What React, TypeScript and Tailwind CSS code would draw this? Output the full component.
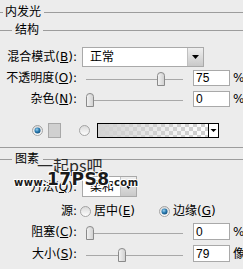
import React from "react";

const FONT = { fontFamily: '"DejaVu Sans", "Noto Sans CJK SC", sans-serif' };

function Line({ className = "" }: { className?: string }) {
  return <div className={`h-px bg-[#9c9c9c] ${className}`} />;
}

function Arrow() {
  return (
    <svg width="7" height="4" viewBox="0 0 7 4">
      <path d="M0 0 H7 L3.5 4 Z" fill="#000" />
    </svg>
  );
}

function Thumb({ left }: { left: number }) {
  return (
    <div className="absolute top-[-7px] w-[8px] h-[14px]" style={{ left }}>
      <svg width="8" height="14" viewBox="0 0 8 14">
        <defs>
          <linearGradient id="tg" x1="0" y1="0" x2="1" y2="0">
            <stop offset="0" stopColor="#f4f4f4" />
            <stop offset="1" stopColor="#cfcfcf" />
          </linearGradient>
        </defs>
        <path d="M0.5 3.5 Q0.5 0.5 4 0.5 Q7.5 0.5 7.5 3.5 V13.5 H0.5 Z" fill="url(#tg)" stroke="#8a8a8a" />
      </svg>
    </div>
  );
}

function Slider({ thumb }: { thumb: number }) {
  return (
    <div className="w-[111px] flex items-center self-stretch">
      <div className="relative ml-[4px] w-[97px] h-px bg-[#a8a8a8] mt-[3px]">
        <Thumb left={thumb} />
      </div>
    </div>
  );
}

function Input({ value, unit }: { value: string; unit: string }) {
  return (
    <>
      <div className="w-[37px] self-stretch bg-white border border-[#a9a9a9] flex items-center pl-[2px] text-[12px] text-black font-['Liberation_Sans']">
        {value}
      </div>
      <span className="ml-[3px] text-[12px] text-black">{unit}</span>
    </>
  );
}

function Label({ children }: { children: React.ReactNode }) {
  return <div className="w-[77px] text-right text-[12px] leading-none text-black whitespace-nowrap shrink-0">{children}</div>;
}

function Radio({ on }: { on: boolean }) {
  return (
    <svg width="11" height="11" viewBox="0 0 11 11">
      <defs>
        <radialGradient id="rb" cx="0.4" cy="0.35" r="0.7">
          <stop offset="0" stopColor="#9fd3ef" />
          <stop offset="0.5" stopColor="#2f7fb4" />
          <stop offset="1" stopColor="#0b4a78" />
        </radialGradient>
        <linearGradient id="rw" x1="0" y1="0" x2="0" y2="1">
          <stop offset="0" stopColor="#d8d8d8" />
          <stop offset="1" stopColor="#ffffff" />
        </linearGradient>
      </defs>
      <circle cx="5.5" cy="5.5" r="5" fill="url(#rw)" stroke="#a3a3a3" />
      {on && <circle cx="5.5" cy="5.5" r="3" fill="url(#rb)" />}
    </svg>
  );
}

function GradientBox() {
  return (
    <svg width="122" height="15" viewBox="0 0 122 15">
      <defs>
        <pattern id="ck" width="8" height="8" patternUnits="userSpaceOnUse">
          <rect width="8" height="8" fill="#ffffff" />
          <rect width="4" height="4" fill="#cfcfcf" />
          <rect x="4" y="4" width="4" height="4" fill="#cfcfcf" />
        </pattern>
        <linearGradient id="fd" x1="0" y1="0" x2="1" y2="0">
          <stop offset="0" stopColor="#d2d2d2" stopOpacity="1" />
          <stop offset="1" stopColor="#d2d2d2" stopOpacity="0" />
        </linearGradient>
      </defs>
      <rect x="0.5" y="0.5" width="121" height="14" fill="#fff" stroke="#000" />
      <rect x="1" y="1" width="110" height="13" fill="url(#ck)" />
      <rect x="1" y="1" width="110" height="13" fill="url(#fd)" />
      <line x1="111.5" y1="1" x2="111.5" y2="14" stroke="#000" />
      <path d="M113.5 6 H119.5 L116.5 9 Z" fill="#000" />
    </svg>
  );
}

function Select({ text, w }: { text: string; w: string }) {
  return (
    <div className={`${w} self-stretch flex bg-white border border-[#a9a9a9]`}>
      <div className="flex-1 flex items-center pl-[7px] text-[12px] text-black">{text}</div>
      <div className="w-[16px] border-l border-[#c0c0c0] bg-gradient-to-b from-[#efefef] to-[#c9c9c9] flex items-center justify-center">
        <Arrow />
      </div>
    </div>
  );
}

function U({ c }: { c: string }) {
  return <span className="underline underline-offset-[1px]">{c}</span>;
}

export default function App() {
  return (
    <div className="w-[243px] h-[269px] bg-[#ececec] relative overflow-hidden" style={FONT}>
      <div className="mt-[4px] h-[16px] flex items-center">
        <Line className="w-[3px]" />
        <span className="ml-[2px] text-[12px] leading-none text-black">内发光</span>
        <Line className="flex-1 ml-[3px]" />
      </div>
      <div className="mt-[2px] h-[16px] flex items-center">
        <Line className="w-[12px]" />
        <span className="ml-[3px] text-[12px] leading-none text-black">结构</span>
        <Line className="flex-1 ml-[4px]" />
      </div>
      <div className="mt-[9px] h-[20px] flex items-center">
        <Label>混合模式(<U c="B" />):</Label>
        <div className="ml-[5px] flex self-stretch">
          <Select text="正常" w="w-[122px]" />
        </div>
      </div>
      <div className="mt-[3px] h-[16px] flex items-center">
        <Label>不透明度(<U c="O" />):</Label>
        <div className="ml-[5px] flex self-stretch items-center">
          <Slider thumb={71} />
          <Input value="75" unit="%" />
        </div>
      </div>
      <div className="mt-[5px] h-[16px] flex items-center">
        <Label>杂色(<U c="N" />):</Label>
        <div className="ml-[5px] flex self-stretch items-center">
          <Slider thumb={0} />
          <Input value="0" unit="%" />
        </div>
      </div>
      <div className="mt-[16px] h-[15px] flex items-center">
        <div className="ml-[32px]"><Radio on /></div>
        <div className="ml-[5px] w-[13px] h-[15px] bg-[#d0d0d0] border border-[#a8a8a8]" />
        <div className="ml-[18px]"><Radio on={false} /></div>
        <div className="ml-[7px] flex"><GradientBox /></div>
      </div>
      <Line className="mt-[9px] w-full" />
      <div className="mt-[3px] h-[16px] flex items-center">
        <Line className="w-[12px]" />
        <span className="ml-[3px] text-[12px] leading-none text-black">图素</span>
        <Line className="flex-1 ml-[4px]" />
      </div>
      <div className="mt-[9px] h-[21px] flex items-center">
        <Label>方法(<U c="Q" />):</Label>
        <div className="ml-[5px] flex self-stretch">
          <Select text="柔和" w="w-[55px]" />
        </div>
      </div>
      <div className="mt-[7px] h-[14px] flex items-center text-[12px] text-black leading-none">
        <Label>源:</Label>
        <div className="ml-[3px] flex"><Radio on={false} /></div>
        <span className="ml-[3px]">居中(<U c="E" />)</span>
        <div className="ml-[24px] flex"><Radio on /></div>
        <span className="ml-[3px]">边缘(<U c="G" />)</span>
      </div>
      <div className="mt-[5px] h-[17px] flex items-center">
        <Label>阻塞(<U c="C" />):</Label>
        <div className="ml-[5px] flex self-stretch items-center">
          <Slider thumb={0} />
          <Input value="0" unit="%" />
        </div>
      </div>
      <div className="mt-[5px] h-[17px] flex items-center">
        <Label>大小(<U c="S" />):</Label>
        <div className="ml-[5px] flex self-stretch items-center">
          <Slider thumb={32} />
          <Input value="79" unit="像" />
        </div>
      </div>

      <div className="absolute left-[37px] top-[157px] text-[16px] leading-none text-[#2a2a2a] font-['Noto_Sans_CJK_SC']">
        一起ps吧
      </div>
      <div className="absolute left-[14px] top-[171px] flex items-end leading-none text-[#1a1a1a] font-bold font-['DejaVu_Sans'] [text-shadow:1px_0_0_#fff,-1px_0_0_#fff,0_1px_0_#fff,0_-1px_0_#fff,1px_1px_0_#fff,-1px_-1px_0_#fff]">
        <span className="text-[10px] tracking-[0.5px]">www.</span>
        <span className="text-[17px] tracking-[0.5px]">17PS8</span>
        <span className="text-[10px] tracking-[0.5px]">.com</span>
      </div>
    </div>
  );
}
